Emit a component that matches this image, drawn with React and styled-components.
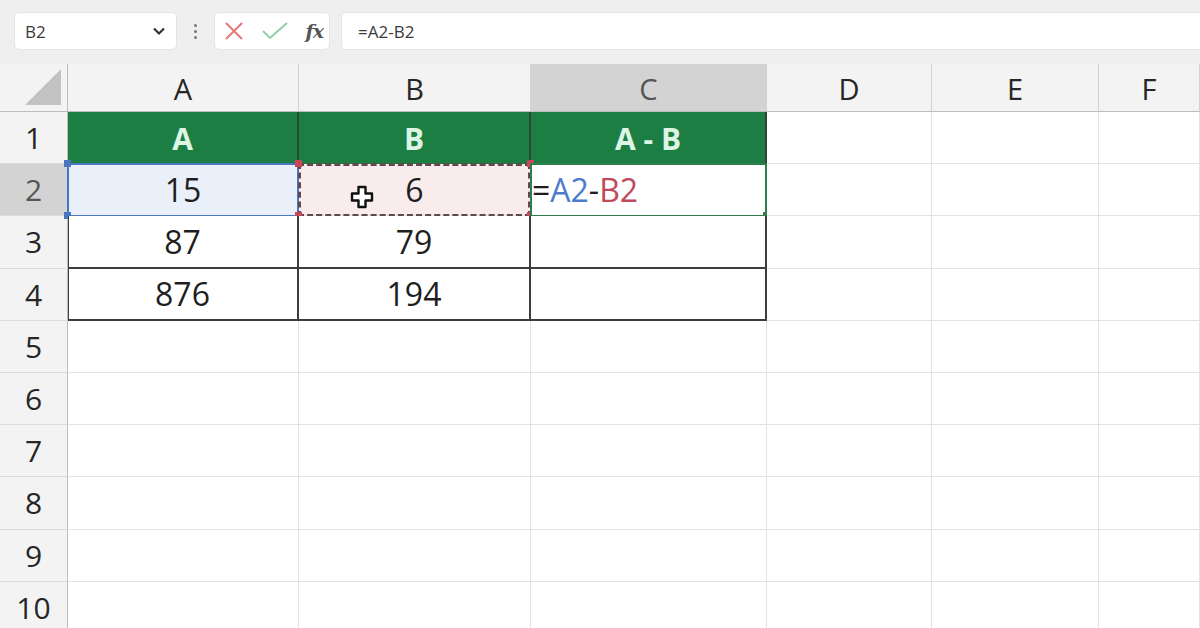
import React from "react";
import styled, { createGlobalStyle, css } from "styled-components";

const GlobalStyle = createGlobalStyle`
  html, body {
    margin: 0;
    padding: 0;
    background: #ffffff;
    overflow: hidden;
  }
  body {
    font-family: "Open Sans", "Liberation Sans", sans-serif;
  }
`;

const Page = styled.div`
  width: 1200px;
  height: 628px;
  overflow: hidden;
  display: flex;
  flex-direction: column;
  background: #ffffff;
`;

/* ---------- formula bar ---------- */

const Toolbar = styled.div`
  height: 64px;
  flex: none;
  display: flex;
  align-items: center;
  padding: 0 0 2px 14px;
  box-sizing: border-box;
  background: #efefef;
`;

const Box = styled.div`
  height: 38px;
  box-sizing: border-box;
  background: #ffffff;
  border-radius: 5px;
  border: 1px solid #e4e4e4;
  display: flex;
  align-items: center;
`;

const NameBox = styled(Box)`
  width: 163px;
  padding: 0 10px 0 10px;
  justify-content: space-between;
  font-size: 17px;
  color: #3a3a3a;
`;

const Dots = styled.div`
  width: 37px;
  display: flex;
  flex-direction: column;
  align-items: center;
  gap: 3px;

  span {
    width: 3px;
    height: 3px;
    border-radius: 50%;
    background: #777;
  }
`;

const IconGroup = styled(Box)`
  width: 116px;
  padding: 0 6px 0 8px;
  justify-content: space-between;
`;

const Fx = styled.span`
  font-family: "DejaVu Serif", "Liberation Serif", serif;
  font-style: italic;
  font-weight: bold;
  font-size: 19px;
  color: #555;
  letter-spacing: -1px;
`;

const FormulaBox = styled(Box)`
  flex: 1;
  margin-left: 11px;
  padding-left: 16px;
  border-radius: 5px 0 0 5px;
  border-right: none;
  font-size: 17px;
  color: #3a3a3a;
`;

/* ---------- sheet ---------- */

const Sheet = styled.div`
  flex: 1;
  display: grid;
  grid-template-columns: 68px 231px 232px 236px 165px 167px 1fr;
  grid-template-rows: 48px repeat(10, 52.2px);
  font-family: "Open Sans", "Liberation Sans", sans-serif;
`;

const HeadCell = styled.div`
  box-sizing: border-box;
  background: ${(p) => (p.$active ? "#d3d3d3" : "#f3f3f3")};
  border-right: 1px solid #d2d2d2;
  border-bottom: 1px solid #bdbdbd;
  display: flex;
  align-items: center;
  justify-content: center;
  font-size: 29px;
  color: ${(p) => (p.$active ? "#555" : "#262626")};
  padding-top: 2px;
`;

const Corner = styled(HeadCell)`
  justify-content: flex-end;
  align-items: flex-end;
  padding: 0 6px 6px 0;
  border-right: 1px solid #bdbdbd;
`;

const RowHead = styled(HeadCell)`
  border-right: 1px solid #bdbdbd;
  border-bottom: 1px solid #dcdcdc;
  font-size: 30px;
  padding-top: 0;
`;

const Cell = styled.div`
  position: relative;
  box-sizing: border-box;
  border-right: 1px solid #e2e2e2;
  border-bottom: 1px solid #e2e2e2;
  display: flex;
  align-items: center;
  justify-content: center;
  font-size: 32px;
  color: #1e1e1e;
  background: ${(p) => p.$fill || "#ffffff"};

  ${(p) =>
    p.$boxed &&
    css`
      border-right: 2px solid #3d3d3d;
      border-bottom: 2px solid #3d3d3d;
    `}

  ${(p) =>
    p.$edge &&
    css`
      box-shadow: inset 1px 0 0 #3d3d3d;
    `}

  ${(p) =>
    p.$head &&
    css`
      background: #1c7e43;
      color: #dcf5e4;
      font-weight: bold;
      font-size: 30px;
      border-right: 2px solid #2b4a36;
      border-bottom: none;
    `}
`;

const Ref = styled.div`
  position: absolute;
  inset: -1px -1px -2px -1px;
  pointer-events: none;
  border: 2px solid ${(p) => p.$color};
`;

const Handle = styled.i`
  position: absolute;
  width: 7px;
  height: 7px;
  background: ${(p) => p.$color};
  ${(p) => (p.$top ? "top: -4px;" : "bottom: -4px;")}
  ${(p) => (p.$left ? "left: -4px;" : "right: -4px;")}
`;

const Marching = styled.div`
  position: absolute;
  inset: -1px -1px -2px -1px;
  pointer-events: none;
  border: 3px dashed #5e4a4c;
`;

const Formula = styled.div`
  width: 100%;
  padding-left: 1px;
  font-size: 32px;
  color: #1e1e1e;
  span.a {
    color: #4e7ccc;
  }
  span.b {
    color: #c04a5c;
  }
`;

const Cursor = styled.svg`
  position: absolute;
  left: 51px;
  top: 21px;
`;

const columns = ["A", "B", "C", "D", "E", "F"];
const tableRows = [
  ["87", "79"],
  ["876", "194"],
];

const App = () => {
  return (
    <Page>
      <GlobalStyle />
      <Toolbar>
        <NameBox>
          <span>B2</span>
          <svg width="14" height="10" viewBox="0 0 14 10">
            <path d="M2 2.5 L7 7.5 L12 2.5" fill="none" stroke="#333" strokeWidth="2.2" />
          </svg>
        </NameBox>
        <Dots>
          <span />
          <span />
          <span />
        </Dots>
        <IconGroup>
          <svg width="22" height="22" viewBox="0 0 22 22">
            <path d="M3 3 L19 19 M19 3 L3 19" stroke="#e07a7a" strokeWidth="2" fill="none" />
          </svg>
          <svg width="28" height="22" viewBox="0 0 28 22">
            <path d="M2 11 L9 18 L26 3" stroke="#8fcfa5" strokeWidth="2" fill="none" />
          </svg>
          <Fx>fx</Fx>
        </IconGroup>
        <FormulaBox>=A2-B2</FormulaBox>
      </Toolbar>

      <Sheet>
        <Corner>
          <svg width="36" height="36" viewBox="0 0 36 36">
            <polygon points="0,36 36,0 36,36" fill="#c2c2c2" />
          </svg>
        </Corner>
        {columns.map((c) => (
          <HeadCell key={c} $active={c === "C"}>
            {c}
          </HeadCell>
        ))}

        {/* row 1 */}
        <RowHead>1</RowHead>
        <Cell $head>A</Cell>
        <Cell $head>B</Cell>
        <Cell $head>A - B</Cell>
        <Cell />
        <Cell />
        <Cell />

        {/* row 2 */}
        <RowHead $active>2</RowHead>
        <Cell $fill="#e9f0fa">
          15
          <Ref $color="#4a76c0" />
          <Handle $color="#4a76c0" $top $left />
          <Handle $color="#4a76c0" $left />
        </Cell>
        <Cell $fill="#f8eced">
          6
          <Marching />
          <Handle $color="#c8465a" $top $left />
          <Handle $color="#c8465a" $top />
          <Handle $color="#c8465a" $left />
          <Handle $color="#c8465a" />
          <Cursor width="24" height="24" viewBox="0 0 24 24">
            <path
              d="M8.5 2 H15.5 V8.5 H22 V15.5 H15.5 V22 H8.5 V15.5 H2 V8.5 H8.5 Z"
              fill="#ffffff"
              stroke="#111"
              strokeWidth="2.4"
              strokeLinejoin="round"
            />
          </Cursor>
        </Cell>
        <Cell>
          <Formula>
            =<span className="a">A2</span>-<span className="b">B2</span>
          </Formula>
          <Ref $color="#2f7d4c" />
          <Handle $color="#2f7d4c" />
        </Cell>
        <Cell />
        <Cell />
        <Cell />

        {/* rows 3-4 */}
        {tableRows.map((r, i) => (
          <React.Fragment key={i}>
            <RowHead>{i + 3}</RowHead>
            <Cell $boxed $edge>
              {r[0]}
            </Cell>
            <Cell $boxed>{r[1]}</Cell>
            <Cell $boxed />
            <Cell />
            <Cell />
            <Cell />
          </React.Fragment>
        ))}

        {/* empty rows */}
        {[5, 6, 7, 8, 9, 10].map((n) => (
          <React.Fragment key={n}>
            <RowHead>{n}</RowHead>
            {columns.map((c) => (
              <Cell key={c} />
            ))}
          </React.Fragment>
        ))}
      </Sheet>
    </Page>
  );
};

export default App;
